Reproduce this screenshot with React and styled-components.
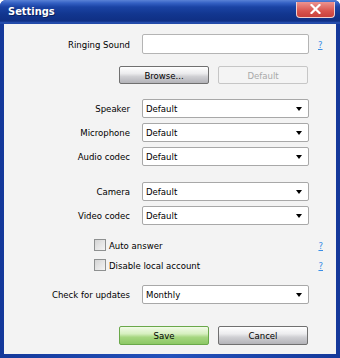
import React from "react";
import styled, { createGlobalStyle } from "styled-components";

const FONT = `"DejaVu Sans Condensed", "DejaVu Sans", sans-serif`;

const Global = createGlobalStyle`
  html, body { margin: 0; padding: 0; background: #ffffff; }
  body { font-family: ${FONT}; }
  * { box-sizing: border-box; }
`;

const Window = styled.div`
  width: 340px;
  height: 358px;
  display: flex;
  flex-direction: column;
  background: linear-gradient(to right, #14389a, #2452bb 50%, #14389a);
  border-radius: 6px 6px 0 0;
  overflow: hidden;
`;

const TitleBar = styled.div`
  height: 24px;
  flex: none;
  display: flex;
  align-items: center;
  justify-content: space-between;
  padding: 0 5px 1px 8px;
  background: linear-gradient(to bottom, #5a82d6 0px, #3461c4 3px, #1a43a4 7px, #12368f 14px, #0f2f84 21px, #2a55b8 23px, #1a3f9a 24px);
`;

const Title = styled.span`
  color: #ffffff;
  font-family: "DejaVu Sans Condensed", "DejaVu Sans", sans-serif;
  font-weight: bold;
  font-size: 11px;
  text-shadow: 1px 1px 0 #0a1f5c;
`;

const CloseButton = styled.div`
  width: 39px;
  height: 16px;
  margin-top: -4px;
  border: 1px solid #f0d0d0;
  border-top: none;
  border-radius: 0 0 4px 4px;
  background: linear-gradient(to bottom, #ec9490, #d8544e 60%, #c8403c);
  display: flex;
  align-items: center;
  justify-content: center;
`;

const Body = styled.div`
  flex: 1;
  margin: 0 4px 4px 4px;
  background: #f3f3f3;
  display: flex;
  flex-direction: column;
  padding-top: 10px;
  font-family: ${FONT};
  font-size: 9.5px;
  color: #000;
`;

const Row = styled.div`
  display: grid;
  grid-template-columns: 126px 167px 26px;
  column-gap: 12px;
  align-items: center;
  height: ${(p) => p.$h || 19}px;
  margin-top: ${(p) => p.$mt || 0}px;
`;

const Label = styled.span`
  text-align: right;
  font-size: 9.5px;
  white-space: nowrap;
`;

const TextInput = styled.div`
  height: 20px;
  background: #ffffff;
  border: 1px solid #b4b4b4;
  border-radius: 2px;
`;

const SelectBox = styled.div`
  height: 19px;
  background: #ffffff;
  border: 1px solid #a8a8a8;
  border-radius: 2px;
  display: flex;
  align-items: center;
  justify-content: space-between;
  padding: 0 6px 0 3px;
  font-size: 9.5px;
`;

const Arrow = styled.span`
  width: 0;
  height: 0;
  border-left: 3px solid transparent;
  border-right: 3px solid transparent;
  border-top: 4px solid #000;
`;

const Help = styled.a`
  color: #3a8ee6;
  text-decoration: underline;
  font-size: 9.5px;
  justify-self: start;
  margin-left: -3px;
`;

const ButtonRow = styled.div`
  display: flex;
  justify-content: flex-end;
  gap: 9px;
  padding-right: 28px;
  margin-top: ${(p) => p.$mt || 0}px;
`;

const Button = styled.div`
  width: 90px;
  height: ${(p) => p.$h || 18}px;
  display: flex;
  align-items: center;
  justify-content: center;
  font-size: 9.5px;
  border-radius: 2px;
  border: 1px solid ${(p) =>
    p.$variant === "green" ? "#6aa84a" : p.$variant === "disabled" ? "#c6c6c6" : "#707070"};
  color: ${(p) => (p.$variant === "disabled" ? "#a9a9a9" : "#000")};
  background: ${(p) =>
    p.$variant === "green"
      ? "linear-gradient(to bottom, #f2fbe8 0%, #d6efbf 40%, #a6d680 60%, #8cc865 100%)"
      : p.$variant === "disabled"
      ? "#f4f4f4"
      : "linear-gradient(to bottom, #ffffff 0%, #ececee 40%, #cfcfd3 60%, #b3b3b8 100%)"};
`;

const CheckRow = styled.div`
  display: flex;
  align-items: center;
  height: 14px;
  margin-top: ${(p) => p.$mt || 0}px;
  padding-left: 90px;
  padding-right: 13px;
`;

const Check = styled.span`
  width: 12px;
  height: 12px;
  border: 1px solid #8e9090;
  background: linear-gradient(to bottom right, #d4d4d4, #f4f4f4);
  margin-right: 3px;
  flex: none;
`;

const CheckText = styled.span`
  flex: 1;
  font-size: 9.5px;
`;

const SelectRow = ({ label, value, mt }) => (
  <Row $mt={mt}>
    <Label>{label}</Label>
    <SelectBox>
      <span>{value}</span>
      <Arrow />
    </SelectBox>
    <span />
  </Row>
);

export default function App() {
  return (
    <>
      <Global />
      <Window>
        <TitleBar>
          <Title>Settings</Title>
          <CloseButton>
            <svg width="11" height="10" viewBox="0 0 11 10">
              <path d="M1.5 1 L9.5 9 M9.5 1 L1.5 9" stroke="#ffffff" strokeWidth="2.2" strokeLinecap="square" />
            </svg>
          </CloseButton>
        </TitleBar>
        <Body>
          <Row $h={20}>
            <Label>Ringing Sound</Label>
            <TextInput />
            <Help>?</Help>
          </Row>
          <ButtonRow $mt={12}>
            <Button>Browse...</Button>
            <Button $variant="disabled">Default</Button>
          </ButtonRow>
          <SelectRow label="Speaker" value="Default" mt={15} />
          <SelectRow label="Microphone" value="Default" mt={5} />
          <SelectRow label="Audio codec" value="Default" mt={5} />
          <SelectRow label="Camera" value="Default" mt={16} />
          <SelectRow label="Video codec" value="Default" mt={5} />
          <CheckRow $mt={13}>
            <Check />
            <CheckText>Auto answer</CheckText>
            <Help>?</Help>
          </CheckRow>
          <CheckRow $mt={6}>
            <Check />
            <CheckText>Disable local account</CheckText>
            <Help>?</Help>
          </CheckRow>
          <SelectRow label="Check for updates" value="Monthly" mt={13} />
          <ButtonRow $mt={22}>
            <Button $variant="green" $h={19}>Save</Button>
            <Button $h={19}>Cancel</Button>
          </ButtonRow>
        </Body>
      </Window>
    </>
  );
}
